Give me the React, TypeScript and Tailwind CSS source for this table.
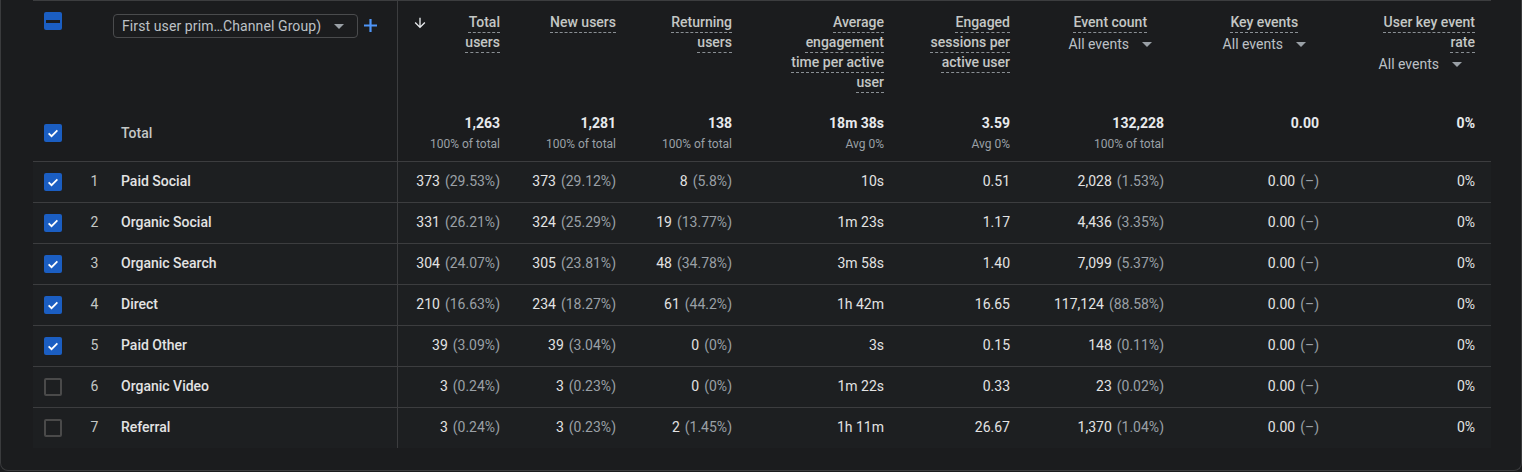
import React from "react";

type Pair = [string, string];
type Row = {
  n: number;
  name: string;
  tu: Pair;
  nu: Pair;
  ru: Pair;
  avg: string;
  eng: string;
  ev: Pair;
  ke: Pair;
  rate: string;
  checked: boolean;
};

const rows: Row[] = [
  { n: 1, name: "Paid Social", tu: ["373", "29.53%"], nu: ["373", "29.12%"], ru: ["8", "5.8%"], avg: "10s", eng: "0.51", ev: ["2,028", "1.53%"], ke: ["0.00", "–"], rate: "0%", checked: true },
  { n: 2, name: "Organic Social", tu: ["331", "26.21%"], nu: ["324", "25.29%"], ru: ["19", "13.77%"], avg: "1m 23s", eng: "1.17", ev: ["4,436", "3.35%"], ke: ["0.00", "–"], rate: "0%", checked: true },
  { n: 3, name: "Organic Search", tu: ["304", "24.07%"], nu: ["305", "23.81%"], ru: ["48", "34.78%"], avg: "3m 58s", eng: "1.40", ev: ["7,099", "5.37%"], ke: ["0.00", "–"], rate: "0%", checked: true },
  { n: 4, name: "Direct", tu: ["210", "16.63%"], nu: ["234", "18.27%"], ru: ["61", "44.2%"], avg: "1h 42m", eng: "16.65", ev: ["117,124", "88.58%"], ke: ["0.00", "–"], rate: "0%", checked: true },
  { n: 5, name: "Paid Other", tu: ["39", "3.09%"], nu: ["39", "3.04%"], ru: ["0", "0%"], avg: "3s", eng: "0.15", ev: ["148", "0.11%"], ke: ["0.00", "–"], rate: "0%", checked: true },
  { n: 6, name: "Organic Video", tu: ["3", "0.24%"], nu: ["3", "0.23%"], ru: ["0", "0%"], avg: "1m 22s", eng: "0.33", ev: ["23", "0.02%"], ke: ["0.00", "–"], rate: "0%", checked: false },
  { n: 7, name: "Referral", tu: ["3", "0.24%"], nu: ["3", "0.23%"], ru: ["2", "1.45%"], avg: "1h 11m", eng: "26.67", ev: ["1,370", "1.04%"], ke: ["0.00", "–"], rate: "0%", checked: false },
];

const GRID =
  "grid grid-cols-[42px_38px_285px_118px_116px_116px_152px_126px_154px_155px_156px]";

function CheckBox({ state }: { state: "checked" | "unchecked" | "indeterminate" }) {
  if (state === "unchecked") {
    return <div className="h-[18px] w-[18px] rounded-[2px] border-2 border-[#4a4a4a]" />;
  }
  return (
    <div className="flex h-[18px] w-[18px] items-center justify-center rounded-[2px] bg-[#1b5ec2]">
      {state === "checked" ? (
        <svg width="14" height="14" viewBox="0 0 24 24">
          <path d="M4.5 12.5l5 5L19.5 7.5" fill="none" stroke="#ffffff" strokeWidth="3" />
        </svg>
      ) : (
        <div className="h-[3px] w-[14px] bg-[#1b1c1e]" />
      )}
    </div>
  );
}

function Caret() {
  return (
    <svg width="10" height="5" viewBox="0 0 10 5">
      <path d="M0 0h10L5 5z" fill="#9aa0a6" />
    </svg>
  );
}

function Title({ children, className = "" }: { children: React.ReactNode; className?: string }) {
  return (
    <div
      className={
        "text-[14px] font-medium leading-5 text-[#c4c7c5] underline decoration-dashed decoration-[#8a8f94] decoration-1 underline-offset-[5px] " +
        className
      }
    >
      {children}
    </div>
  );
}

function EventsDrop({ className = "" }: { className?: string }) {
  return (
    <div className={"flex h-6 items-center gap-[13px] text-[14px] leading-5 text-[#bdc1c6] " + className}>
      <span>All events</span>
      <Caret />
    </div>
  );
}

function Val({ v }: { v: Pair }) {
  return (
    <div className="flex items-center justify-end pr-4 text-[14px] text-[#e3e3e3]">
      <span>{v[0]}</span>
      <span className="ml-[5px] text-[#9aa0a6]">({v[1]})</span>
    </div>
  );
}

function Plain({ v }: { v: string }) {
  return <div className="flex items-center justify-end pr-4 text-[14px] text-[#e3e3e3]">{v}</div>;
}

function TotalCell({ v, sub }: { v: string; sub?: string }) {
  return (
    <div className="flex flex-col items-end pr-4 pt-[5px]">
      <div className="text-[14px] font-bold leading-5 text-[#e8eaed]">{v}</div>
      {sub && <div className="mt-[3px] text-[12px] leading-4 text-[#9aa0a6]">{sub}</div>}
    </div>
  );
}

export default function App() {
  return (
    <div className="min-h-[472px] bg-[#1b1c1e]" style={{ fontFamily: "Roboto, 'Noto Sans', sans-serif" }}>
      <div className="h-[471px] rounded-b-[8px] border-x border-b border-[#3a3b3d] bg-[#1b1c1e] pl-[32px]">
        <div className="w-[1458px] border-t border-[#3c3d3f]">
          {/* Header */}
          <div className={GRID + " h-[107px]"}>
            <div className="pl-[11px] pt-[11px]">
              <CheckBox state="indeterminate" />
            </div>
            <div />
            <div className="flex items-start border-r border-[#3c3d3f] pt-[13px]">
              <div className="flex h-[24px] w-[245px] items-center justify-between rounded-[4px] border border-[#4a4b4d] pl-2 pr-[13px]">
                <span className="text-[14px] tracking-[0.1px] text-[#bdc1c6]">First user prim…Channel Group)</span>
                <Caret />
              </div>
              <svg className="ml-[6px] mt-[5px]" width="13" height="13" viewBox="0 0 13 13">
                <path d="M6.5 0v13M0 6.5h13" stroke="#4f95f7" strokeWidth="2.2" />
              </svg>
            </div>
            <div className="flex justify-between pl-[14px] pr-4 pt-[11px]">
              <svg className="mt-[3px]" width="16" height="16" viewBox="0 0 24 24">
                <path d="M20 12l-1.41-1.41L13 16.17V4h-2v12.17l-5.58-5.59L4 12l8 8 8-8z" fill="#e8eaed" />
              </svg>
              <Title className="max-w-[66px] text-right">Total users</Title>
            </div>
            <div className="flex justify-end pr-4 pt-[11px]">
              <Title className="text-right">New users</Title>
            </div>
            <div className="flex justify-end pr-4 pt-[11px]">
              <Title className="max-w-[80px] text-right">Returning users</Title>
            </div>
            <div className="flex justify-end pr-4 pt-[11px]">
              <Title className="max-w-[100px] text-right">Average engagement time per active user</Title>
            </div>
            <div className="flex justify-end pr-4 pt-[11px]">
              <Title className="max-w-[100px] text-right">Engaged sessions per active user</Title>
            </div>
            <div className="flex justify-end pr-[28px] pt-[11px]">
              <div className="flex flex-col items-center">
                <Title>Event count</Title>
                <EventsDrop />
              </div>
            </div>
            <div className="flex justify-end pr-[29px] pt-[11px]">
              <div className="flex flex-col items-center">
                <Title>Key events</Title>
                <EventsDrop />
              </div>
            </div>
            <div className="flex flex-col items-end pr-4 pt-[11px]">
              <Title className="max-w-[100px] text-right">User key event rate</Title>
              <EventsDrop className="mr-[13px]" />
            </div>
          </div>

          {/* Total row */}
          <div className={GRID + " h-[54px] border-b border-[#3c3d3f]"}>
            <div className="pl-[11px] pt-[16px]">
              <CheckBox state="checked" />
            </div>
            <div />
            <div className="border-r border-[#3c3d3f] pl-2 pt-[15px] text-[14px] font-medium leading-5 text-[#c4c7c5]">Total</div>
            <TotalCell v="1,263" sub="100% of total" />
            <TotalCell v="1,281" sub="100% of total" />
            <TotalCell v="138" sub="100% of total" />
            <TotalCell v="18m 38s" sub="Avg 0%" />
            <TotalCell v="3.59" sub="Avg 0%" />
            <TotalCell v="132,228" sub="100% of total" />
            <TotalCell v="0.00" />
            <TotalCell v="0%" />
          </div>

          {/* Data rows */}
          {rows.map((r, i) => (
            <div
              key={r.n}
              className={
                GRID +
                " bg-[#1d1f21] " +
                (i < rows.length - 1 ? "h-[41px] border-b border-[#3c3d3f]" : "h-[40px]")
              }
            >
              <div className="flex items-center border-r-0 pb-[1px] pl-[11px]">
                <CheckBox state={r.checked ? "checked" : "unchecked"} />
              </div>
              <div className="flex items-center justify-center pb-[2px] pl-[1px] text-[14px] text-[#c4c7c5]">{r.n}</div>
              <div className="flex items-center border-r border-[#3c3d3f] pb-[2px] pl-2 text-[14px] font-medium text-[#e3e3e3]">
                {r.name}
              </div>
              <div className="flex flex-col justify-center pb-[2px]"><Val v={r.tu} /></div>
              <div className="flex flex-col justify-center pb-[2px]"><Val v={r.nu} /></div>
              <div className="flex flex-col justify-center pb-[2px]"><Val v={r.ru} /></div>
              <div className="flex flex-col justify-center pb-[2px]"><Plain v={r.avg} /></div>
              <div className="flex flex-col justify-center pb-[2px]"><Plain v={r.eng} /></div>
              <div className="flex flex-col justify-center pb-[2px]"><Val v={r.ev} /></div>
              <div className="flex flex-col justify-center pb-[2px]"><Val v={r.ke} /></div>
              <div className="flex flex-col justify-center pb-[2px]"><Plain v={r.rate} /></div>
            </div>
          ))}
        </div>
      </div>
    </div>
  );
}
